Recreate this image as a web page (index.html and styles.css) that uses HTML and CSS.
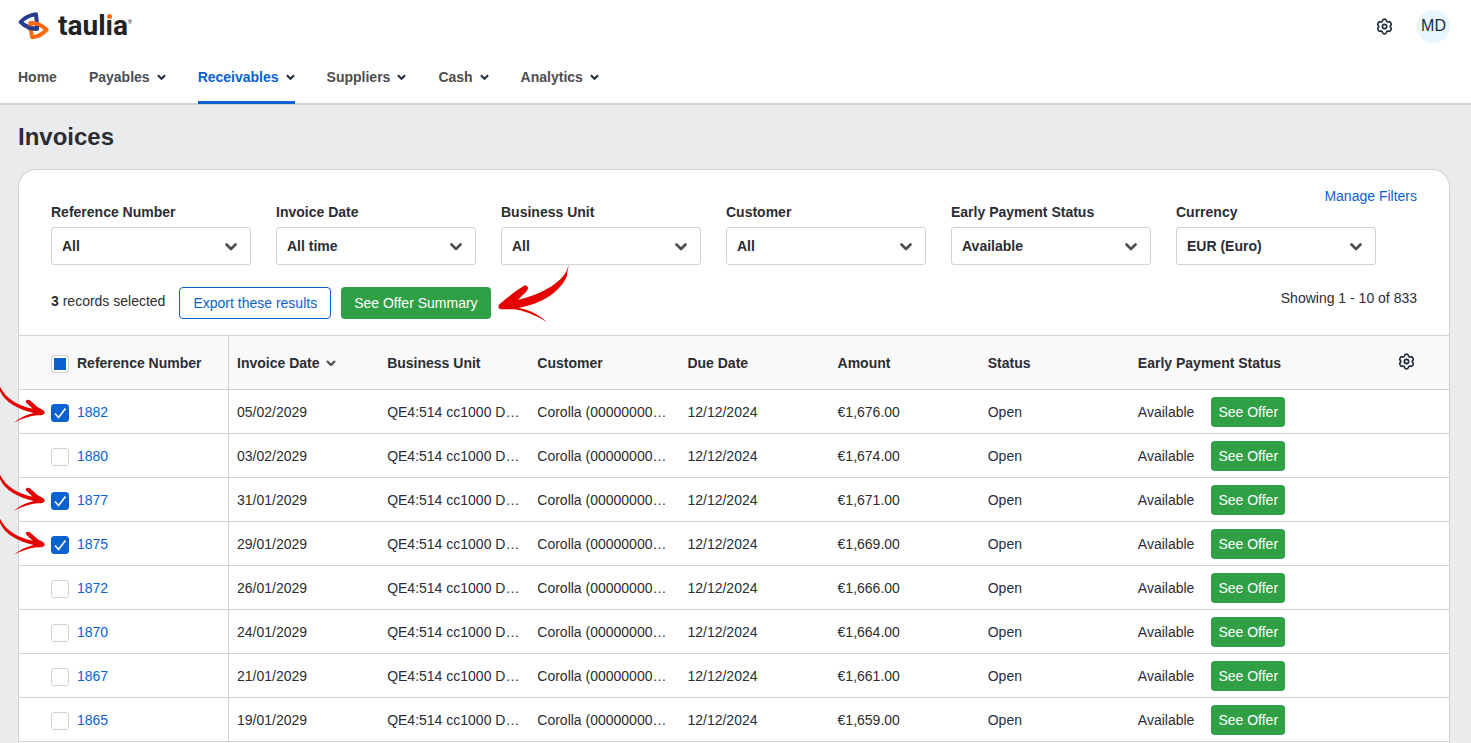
FILE: index.html
```html
<!DOCTYPE html>
<html lang="en">
<head>
<meta charset="utf-8">
<meta name="viewport" content="width=device-width, initial-scale=1">
<title>Invoices</title>
<link rel="stylesheet" href="styles.css">
</head>
<body>
<svg class="defs" aria-hidden="true">
  <symbol id="caret" viewBox="0 0 10 6"><path d="M1 1l4 4 4-4" fill="none" stroke="currentColor" stroke-width="2.200"/></symbol>
  <symbol id="chevron" viewBox="0 0 12 8"><path d="M1.500 1.500L6 6l4.500-4.500" fill="none" stroke="currentColor" stroke-width="2.600" stroke-linecap="round" stroke-linejoin="round"/></symbol>
  <symbol id="gear" viewBox="0 0 24 24"><g fill="none" stroke="currentColor" stroke-width="2.300" stroke-linejoin="round"><path d="M9.700 3Q10 1.500 12 1.500T14.300 3L15.600 5.200Q16 5.700 16.700 5.600L19 5.200Q20 5.200 20.800 6.800T21.600 9.500L20.200 11.400Q19.900 12 20.200 12.600L21.600 14.500Q21.600 15.600 20.800 17.200T19 18.800L16.700 18.400Q16 18.300 15.600 18.800L14.300 21Q14 22.500 12 22.500T9.700 21L8.400 18.800Q8 18.300 7.300 18.400L5 18.800Q4 18.800 3.200 17.200T2.400 14.500L3.800 12.600Q4.100 12 3.800 11.400L2.400 9.500Q2.400 8.400 3.200 6.800T5 5.200L7.300 5.600Q8 5.700 8.400 5.200z"/><circle cx="12" cy="12" r="3"/></g></symbol>
  <symbol id="arrow" viewBox="0 0 135 114"><path d="M0 5C18 42 55 62 98 71L79 53C74 46 82 42 90 46L113 67C122 72 134 76 134 83C133 90 122 91 112 91C90 93 66 101 42 113C60 98 80 89 101 84C55 73 16 54 0 18z" fill="#e60000"/></symbol>
</svg>

<header class="header">
  <div class="topbar">
    <a class="brand" href="#" aria-label="taulia">
      <svg class="brand-mark" viewBox="0 0 93 84" aria-hidden="true">
        <g fill="none" stroke-width="12" stroke-linejoin="round">
          <path d="M8 30C20 17 36 9 54 7C55 20 58 36 57 50C40 50 20 42 8 30z" stroke="#273a92"/>
          <path d="M37 33C55 31 74 42 86 53C75 66 58 74 43 76C40 64 36 50 37 33z" stroke="#ff6a0d"/>
          <path d="M30 46C40 50 50 51 57 50L57 42" stroke="#273a92"/>
        </g>
      </svg>
      <span class="brand-name">taul<span class="brand-i">i</span>a<span class="brand-reg">®</span></span>
    </a>
    <div class="topbar-tools">
      <button class="icon-button" type="button" aria-label="Settings"><svg class="gear"><use href="#gear"/></svg></button>
      <button class="avatar" type="button">MD</button>
    </div>
  </div>
  <nav class="nav">
    <a class="nav-link" href="#">Home</a>
    <a class="nav-link" href="#">Payables <svg class="caret"><use href="#caret"/></svg></a>
    <a class="nav-link nav-link-active" href="#">Receivables <svg class="caret"><use href="#caret"/></svg></a>
    <a class="nav-link" href="#">Suppliers <svg class="caret"><use href="#caret"/></svg></a>
    <a class="nav-link" href="#">Cash <svg class="caret"><use href="#caret"/></svg></a>
    <a class="nav-link" href="#">Analytics <svg class="caret"><use href="#caret"/></svg></a>
  </nav>
</header>

<main class="main">
  <h1 class="title">Invoices</h1>
  <section class="card">
    <div class="card-head">
      <div class="manage"><a class="link" href="#">Manage Filters</a></div>
      <div class="filters">
        <div class="filter"><label for="f-ref">Reference Number</label><div class="select"><select id="f-ref"><option>All</option></select><svg class="chevron"><use href="#chevron"/></svg></div></div>
        <div class="filter"><label for="f-date">Invoice Date</label><div class="select"><select id="f-date"><option>All time</option></select><svg class="chevron"><use href="#chevron"/></svg></div></div>
        <div class="filter"><label for="f-unit">Business Unit</label><div class="select"><select id="f-unit"><option>All</option></select><svg class="chevron"><use href="#chevron"/></svg></div></div>
        <div class="filter"><label for="f-cust">Customer</label><div class="select"><select id="f-cust"><option>All</option></select><svg class="chevron"><use href="#chevron"/></svg></div></div>
        <div class="filter"><label for="f-status">Early Payment Status</label><div class="select"><select id="f-status"><option>Available</option></select><svg class="chevron"><use href="#chevron"/></svg></div></div>
        <div class="filter"><label for="f-cur">Currency</label><div class="select"><select id="f-cur"><option>EUR (Euro)</option></select><svg class="chevron"><use href="#chevron"/></svg></div></div>
      </div>
      <div class="actions">
        <p class="selected"><b>3</b> records selected</p>
        <button class="button button-outline" type="button">Export these results</button>
        <div class="pointed">
          <button class="button button-green" type="button">See Offer Summary</button>
          <svg class="arrow-big" viewBox="0 0 216 180" aria-hidden="true"><path d="M211 2C206 50 130 92 60 107L86 82C94 72 89 62 78 65C50 82 26 103 4 121C0 126 1 134 7 136L50 136C84 142 118 156 147 175C122 151 94 137 62 131C130 120 190 84 209 30C203 38 213 12 211 2z" fill="#e60000"/></svg>
        </div>
        <p class="showing">Showing 1 - 10 of 833</p>
      </div>
    </div>

    <table class="table">
      <colgroup><col class="col-ref"><col class="col"><col class="col"><col class="col"><col class="col"><col class="col"><col class="col"><col><col class="col-gear"></colgroup>
      <thead>
        <tr>
          <th><div class="ref"><input class="check check-all" type="checkbox" id="all" aria-label="Select all"><label for="all">Reference Number</label></div></th>
          <th><span class="sorted">Invoice Date <svg class="sort"><use href="#caret"/></svg></span></th>
          <th>Business Unit</th><th>Customer</th><th>Due Date</th><th>Amount</th><th>Status</th><th>Early Payment Status</th>
          <th><button class="icon-button" type="button" aria-label="Table settings"><svg class="gear"><use href="#gear"/></svg></button></th>
        </tr>
      </thead>
      <tbody>
        <tr><td><div class="ref"><svg class="arrow" aria-hidden="true"><use href="#arrow"/></svg><input class="check" type="checkbox" aria-label="Select 1882" checked><a class="link" href="#">1882</a></div></td><td>05/02/2029</td><td>QE4:514 cc1000 D…</td><td>Corolla (00000000…</td><td>12/12/2024</td><td>€1,676.00</td><td>Open</td><td colspan="2"><div class="offer">Available <button class="button button-green button-small" type="button">See Offer</button></div></td></tr>
        <tr><td><div class="ref"><input class="check" type="checkbox" aria-label="Select 1880"><a class="link" href="#">1880</a></div></td><td>03/02/2029</td><td>QE4:514 cc1000 D…</td><td>Corolla (00000000…</td><td>12/12/2024</td><td>€1,674.00</td><td>Open</td><td colspan="2"><div class="offer">Available <button class="button button-green button-small" type="button">See Offer</button></div></td></tr>
        <tr><td><div class="ref"><svg class="arrow" aria-hidden="true"><use href="#arrow"/></svg><input class="check" type="checkbox" aria-label="Select 1877" checked><a class="link" href="#">1877</a></div></td><td>31/01/2029</td><td>QE4:514 cc1000 D…</td><td>Corolla (00000000…</td><td>12/12/2024</td><td>€1,671.00</td><td>Open</td><td colspan="2"><div class="offer">Available <button class="button button-green button-small" type="button">See Offer</button></div></td></tr>
        <tr><td><div class="ref"><svg class="arrow" aria-hidden="true"><use href="#arrow"/></svg><input class="check" type="checkbox" aria-label="Select 1875" checked><a class="link" href="#">1875</a></div></td><td>29/01/2029</td><td>QE4:514 cc1000 D…</td><td>Corolla (00000000…</td><td>12/12/2024</td><td>€1,669.00</td><td>Open</td><td colspan="2"><div class="offer">Available <button class="button button-green button-small" type="button">See Offer</button></div></td></tr>
        <tr><td><div class="ref"><input class="check" type="checkbox" aria-label="Select 1872"><a class="link" href="#">1872</a></div></td><td>26/01/2029</td><td>QE4:514 cc1000 D…</td><td>Corolla (00000000…</td><td>12/12/2024</td><td>€1,666.00</td><td>Open</td><td colspan="2"><div class="offer">Available <button class="button button-green button-small" type="button">See Offer</button></div></td></tr>
        <tr><td><div class="ref"><input class="check" type="checkbox" aria-label="Select 1870"><a class="link" href="#">1870</a></div></td><td>24/01/2029</td><td>QE4:514 cc1000 D…</td><td>Corolla (00000000…</td><td>12/12/2024</td><td>€1,664.00</td><td>Open</td><td colspan="2"><div class="offer">Available <button class="button button-green button-small" type="button">See Offer</button></div></td></tr>
        <tr><td><div class="ref"><input class="check" type="checkbox" aria-label="Select 1867"><a class="link" href="#">1867</a></div></td><td>21/01/2029</td><td>QE4:514 cc1000 D…</td><td>Corolla (00000000…</td><td>12/12/2024</td><td>€1,661.00</td><td>Open</td><td colspan="2"><div class="offer">Available <button class="button button-green button-small" type="button">See Offer</button></div></td></tr>
        <tr><td><div class="ref"><input class="check" type="checkbox" aria-label="Select 1865"><a class="link" href="#">1865</a></div></td><td>19/01/2029</td><td>QE4:514 cc1000 D…</td><td>Corolla (00000000…</td><td>12/12/2024</td><td>€1,659.00</td><td>Open</td><td colspan="2"><div class="offer">Available <button class="button button-green button-small" type="button">See Offer</button></div></td></tr>
      </tbody>
    </table>
  </section>
</main>
<script src="script.js"></script>
</body>
</html>
```
FILE: styles.css
```css
* { box-sizing: border-box; }

body {
  margin: 0;
  min-height: 100vh;
  display: flex;
  flex-direction: column;
  background: #eaebec;
  color: #2b2d33;
  font: 14px/16px "Liberation Sans", Arial, sans-serif;
}

button, select, input { font: inherit; color: inherit; margin: 0; }
button { cursor: pointer; }
p, h1 { margin: 0; }
.defs { display: none; }

.header {
  background: #fff;
  border-bottom: 2px solid #d1d3d3;
}
.topbar {
  height: 52px;
  padding: 0 21px 0 18px;
  display: flex;
  align-items: center;
  justify-content: space-between;
}
.brand {
  display: flex;
  align-items: center;
  gap: 9px;
  color: #222;
  text-decoration: none;
}
.brand-mark { width: 31px; height: 28px; }
.brand-name { display: flex; font: bold 28px/32px Roboto, sans-serif; }
.brand-i { position: relative; }
.brand-i::after {
  content: "";
  position: absolute;
  left: 1px;
  top: 4px;
  width: 5px;
  height: 5px;
  border-radius: 50%;
  background: #ff6a0d;
  box-shadow: 0 0 0 1px #fff;
}
.brand-reg { font-size: 5px; line-height: 24px; }
.topbar-tools { display: flex; align-items: center; gap: 24px; }
.icon-button {
  display: inline-flex;
  padding: 0;
  border: 0;
  background: none;
  color: #1c2b3b;
}
.gear { width: 17px; height: 17px; }
.avatar {
  width: 33px;
  height: 33px;
  padding: 0;
  border: 0;
  border-radius: 50%;
  background: #e7f6ff;
  color: #1c2b3b;
  font-size: 16px;
}

.nav {
  height: 52px;
  margin-bottom: -1px;
  padding: 0 18px;
  display: flex;
  gap: 32px;
}
.nav-link {
  display: flex;
  align-items: center;
  gap: 7px;
  border-bottom: 3px solid transparent;
  color: #4d4d4f;
  font-weight: bold;
  text-decoration: none;
}
.nav-link-active { color: #0a62cf; border-color: #0a62cf; }
.caret { width: 9px; height: 6px; color: #1c2b3b; }

.main {
  flex: 1;
  display: flex;
  flex-direction: column;
  padding: 18px 21px 0 18px;
}
.title { font-size: 24px; line-height: 28px; margin-bottom: 18px; }

.card {
  flex: 1;
  background: #fff;
  border: 1px solid #d1d3d3;
  border-bottom: 0;
  border-radius: 18px 18px 0 0;
}
.card-head { padding: 18px 32px 16px; }
.manage { text-align: right; }
.link { color: #0a62cf; text-decoration: none; }

.filters { display: flex; flex-wrap: wrap; gap: 16px 25px; }
.filter { display: flex; flex-direction: column; gap: 7px; font-weight: bold; }
.select { position: relative; width: 200px; }
.select select {
  appearance: none;
  display: block;
  width: 100%;
  height: 38px;
  padding: 0 32px 0 10px;
  border: 1px solid #d1d3d3;
  border-radius: 3px;
  background: #fff;
}
.chevron {
  position: absolute;
  right: 14px;
  top: 16px;
  width: 12px;
  height: 8px;
  color: #4d4d4f;
  pointer-events: none;
}

.actions { display: flex; align-items: flex-start; margin-top: 22px; }
.selected { line-height: 28px; margin-right: 14px; }
.showing { line-height: 22px; margin-left: auto; }
.button {
  height: 32px;
  padding: 0 13px;
  border: 1px solid #0a62cf;
  border-radius: 4px;
  background: #fff;
  color: #0a62cf;
  white-space: nowrap;
}
.button-outline { margin-right: 10px; }
.button-green { border: 0; background: #30a046; color: #fff; }
.button-small { height: 30px; padding: 0 7px; }
.pointed { position: relative; }
.arrow-big {
  position: absolute;
  left: calc(100% + 7px);
  top: -23px;
  width: 72px;
  height: 60px;
}

.table {
  width: 100%;
  table-layout: fixed;
  border-collapse: separate;
  border-spacing: 0;
  border-top: 1px solid #d1d3d3;
}
.col-ref { width: 210px; }
.col { width: 10.5%; }
.col-gear { width: 59px; }
.table th, .table td {
  height: 44px;
  padding: 0 8px;
  border-bottom: 1px solid #d1d3d3;
  text-align: left;
  white-space: nowrap;
}
.table th { height: 54px; background: #f9f9f9; }
.table th:first-child, .table td:first-child {
  padding-left: 32px;
  border-right: 1px solid #d1d3d3;
}
.ref { position: relative; display: flex; align-items: center; gap: 8px; }
.sorted { display: flex; align-items: center; gap: 7px; }
.sort { width: 10px; height: 6px; color: #4d4d4f; }
.offer { display: flex; align-items: center; gap: 17px; }

.check {
  appearance: none;
  width: 18px;
  height: 18px;
  margin-top: 2px;
  border: 1px solid #d1d3d3;
  border-radius: 3px;
  background: #fff center / 16px 16px no-repeat;
}
.check:checked {
  border-color: #0a62cf;
  background-color: #0a62cf;
  background-image: url("data:image/svg+xml,%3Csvg xmlns='http://www.w3.org/2000/svg' viewBox='0 0 16 16'%3E%3Cpath d='M3 8.500l3.500 4L13.500 3.500' fill='none' stroke='white' stroke-width='1.600'/%3E%3C/svg%3E");
}
.check-all:indeterminate {
  background-image: linear-gradient(#0a62cf, #0a62cf);
  background-size: 12px 12px;
}
.arrow {
  position: absolute;
  right: calc(100% + 6px);
  top: calc(50% - 27px);
  width: 45px;
  height: 38px;
}
```
FILE: script.js
```js
document.getElementById("all").indeterminate = true;
```
